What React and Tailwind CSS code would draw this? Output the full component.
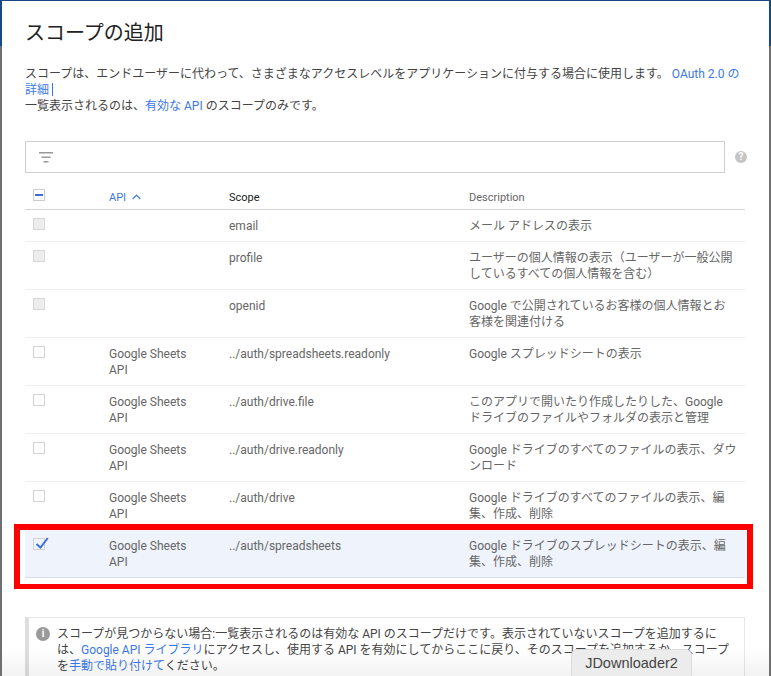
import React from "react";

const Check = ({ state }) => {
  if (state === "disabled") return <div className="w-[10px] h-[10px] box-content border border-[#d8d8d8] bg-[#ececec]" />;
  if (state === "checked")
    return (
      <div className="relative w-[10px] h-[10px] box-content border border-[#cfd2d8]">
        <svg className="absolute left-0 top-[-2px]" width="15" height="13" viewBox="0 0 15 13" fill="none">
          <path d="M2.500 7 L6.500 10.500 L13.800 1" stroke="#3f70d8" strokeWidth="2" />
        </svg>
      </div>
    );
  if (state === "mixed")
    return (
      <div className="flex items-center justify-center w-[10px] h-[10px] box-content border border-[#cccccc]">
        <div className="w-[8px] h-[2px] bg-[#3b6fd6]" />
      </div>
    );
  return <div className="w-[10px] h-[10px] box-content border border-[#d4d4d4] bg-white" />;
};

const rows = [
  { s: "disabled", api: "", scope: "email", desc: "メール アドレスの表示", h: "h-[32px]" },
  { s: "disabled", api: "", scope: "profile", desc: "ユーザーの個人情報の表示（ユーザーが一般公開しているすべての個人情報を含む）", h: "h-[48px]" },
  { s: "disabled", api: "", scope: "openid", desc: "Google で公開されているお客様の個人情報とお客様を関連付ける", h: "h-[48px]" },
  { s: "off", api: "Google Sheets API", scope: "../auth/spreadsheets.readonly", desc: "Google スプレッドシートの表示", h: "h-[48px]" },
  { s: "off", api: "Google Sheets API", scope: "../auth/drive.file", desc: "このアプリで開いたり作成したりした、Google ドライブのファイルやフォルダの表示と管理", h: "h-[48px]" },
  { s: "off", api: "Google Sheets API", scope: "../auth/drive.readonly", desc: "Google ドライブのすべてのファイルの表示、ダウ\nンロード", h: "h-[48px]", pre: true },
  { s: "off", api: "Google Sheets API", scope: "../auth/drive", desc: "Google ドライブのすべてのファイルの表示、編集、作成、削除", h: "h-[48px]" },
];

const Row = ({ r, selected }) => (
  <div className={`flex ${r.h} box-border border-b ${selected ? "bg-[#eef3fc] border-[#d9dfe9]" : "border-[#eeeeee]"} text-[12px] leading-[16px] text-[#666666]`}>
    <div className="w-[84px] shrink-0 pl-[8px] pt-[8px]"><Check state={r.s} /></div>
    <div className="w-[120px] shrink-0 pt-[8px] pr-[30px]">{r.api}</div>
    <div className="w-[240px] shrink-0 pt-[8px]">{r.scope}</div>
    <div className={`w-[267px] shrink-0 pt-[8px] ${r.pre ? "whitespace-pre" : ""}`}>{r.desc}</div>
  </div>
);

export default function App() {
  return (
    <div className="relative w-[771px] h-[676px] overflow-hidden bg-[#6f6f6f] font-['Roboto','Noto_Sans_CJK_JP',sans-serif]">
      <div className="absolute right-0 top-0 w-[2px] h-[46px] bg-[#174a84]" />
      <div className="absolute left-0 top-0 w-[2px] h-[46px] bg-[#174a84]" />
      <div className="absolute left-0 top-0 w-full h-[1px] bg-[#174a84]" />
      <div className="flex flex-col ml-[2px] mr-[2px] pt-[1px] h-[676px] bg-white pl-[23px] overflow-hidden">
        <h1 className="mt-[18px] text-[20px] leading-[28px] font-normal text-[#212121]">スコープの追加</h1>
        <div className="mt-[19px] text-[12px] leading-[16px] text-[#444444] w-[720px]">
          <p>
            スコープは、エンドユーザーに代わって、さまざまなアクセスレベルをアプリケーションに付与する場合に使用します。{" "}
            <span className="text-[#3b78e7]">OAuth 2.0 の詳細</span>
            <span className="inline-block w-[1px] h-[13px] align-[-2px] ml-[3px] bg-[#3b78e7]" />
          </p>
          <p>
            一覧表示されるのは、<span className="text-[#3b78e7]">有効な API</span> のスコープのみです。
          </p>
        </div>
        <div className="flex items-center mt-[27px]">
          <div className="flex items-center shrink-0 w-[700px] h-[32px] box-border border border-[#d0d0d0] pl-[13px]">
            <svg width="14" height="11" viewBox="0 0 14 11">
              <path d="M0 0h14v1.500H0zM2.500 4.500h9v1.500h-9zM4.500 9h5v1.500h-5z" fill="#999999" />
            </svg>
          </div>
          <div className="flex items-center justify-center shrink-0 ml-[10px] w-[12px] h-[12px] rounded-full bg-[#c4c4c4] text-white text-[10px] leading-[12px] font-bold">?</div>
        </div>
        <div className="flex shrink-0 h-[37px] box-border border-b border-[#d4d4d4] text-[11px] leading-[16px] w-[720px]">
          <div className="w-[84px] shrink-0 pl-[8px] pt-[16px]"><Check state="mixed" /></div>
          <div className="flex w-[120px] shrink-0 items-start gap-[6px] pt-[17px] text-[#3b78e7]">
            API
            <svg className="mt-[4px]" width="9" height="6" viewBox="0 0 9 6" fill="none">
              <path d="M0.700 5 L4.500 1.200 L8.300 5" stroke="#3b78e7" strokeWidth="1.200" />
            </svg>
          </div>
          <div className="w-[240px] shrink-0 pt-[17px] text-[#212121]">Scope</div>
          <div className="w-[276px] shrink-0 pt-[17px] text-[#666666]">Description</div>
        </div>
        <div className="w-[720px] shrink-0">
          {rows.map((r) => <Row key={r.scope} r={r} />)}
        </div>
        <div className="w-[720px] shrink-0 relative">
          <Row selected r={{ s: "checked", api: "Google Sheets API", scope: "../auth/spreadsheets", desc: "Google ドライブのスプレッドシートの表示、編集、作成、削除", h: "h-[48px]" }} />
          <div className="absolute left-[-11px] right-[-8px] top-[-6px] h-[65px] border-[6px] border-b-[5px] border-[#ff0000]" />
        </div>
        <div className="flex shrink-0 mt-[39px] w-[720px] h-[80px] bg-white border-t border-r border-[#e8e8e8] border-l-[4px] border-l-[#dedede] pl-[7px] pr-[14px] pt-[8px] text-[12px] leading-[16px] text-[#444444]">
          <div className="flex items-center justify-center shrink-0 w-[14px] h-[14px] mt-[1px] rounded-full bg-[#9a9a9a] text-white text-[10px] font-bold">i</div>
          <p className="ml-[7px]">
            スコープが見つからない場合:一覧表示されるのは有効な API のスコープだけです。表示されていないスコープを追加するには、<span className="text-[#3b78e7]">Google API ライブラリ</span>にアクセスし、使用する API を有効にしてからここに戻り、そのスコープを追加するか、スコープを<span className="text-[#3b78e7]">手動で貼り付けて</span>ください。
          </p>
        </div>
      </div>
      <div className="absolute left-[2px] right-[2px] bottom-0 h-[28px] bg-linear-to-b from-transparent to-black/5" />
      <div className="absolute left-[571px] top-[649px] w-[121px] h-[32px] rounded-[6px] border border-[#dcdcdc] bg-[#ececec] text-[14.5px] leading-[27px] text-center text-[#444444] font-['Liberation_Sans',sans-serif]">JDownloader2</div>
    </div>
  );
}
